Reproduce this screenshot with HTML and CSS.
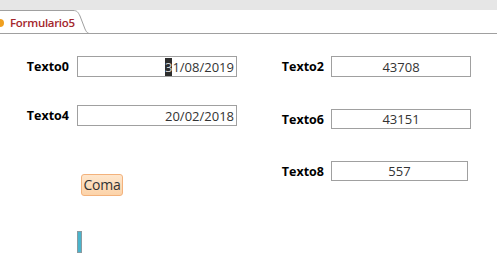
FILE: index.html
```html
<!DOCTYPE html>
<html lang="es">
<head>
<meta charset="utf-8">
<title>Formulario5</title>
<link rel="stylesheet" href="styles.css">
</head>
<body>
<div class="topbar"></div>
<div class="tabstrip">
  <div class="tab">
    <svg class="tab-shape" width="90" height="24" viewBox="0 0 90 24">
      <path d="M0 0.5 H73 C77 0.5 78 2 80 6 L85 19 C86.5 22.5 88 23.5 90 23.5" fill="#fff" stroke="#a0a0a0" stroke-width="1"/>
    </svg>
    <span class="tab-icon"></span>
    <span class="tab-label">Formulario5</span>
  </div>
</div>
<div class="form">
  <div class="col col-left">
    <div class="row row-0">
      <span class="label">Texto0</span>
      <span class="box box-left"><span class="caret">3</span>1/08/2019</span>
    </div>
    <div class="row row-4">
      <span class="label">Texto4</span>
      <span class="box box-left">20/02/2018</span>
    </div>
    <div class="btn-wrap"><button class="btn">Coma</button></div>
    <div class="bar"></div>
  </div>
  <div class="col col-right">
    <div class="row row-2">
      <span class="label">Texto2</span>
      <span class="box box-right center">43708</span>
    </div>
    <div class="row row-6">
      <span class="label">Texto6</span>
      <span class="box box-right center short">43151</span>
    </div>
    <div class="row row-8">
      <span class="label">Texto8</span>
      <span class="box box-right8 center short">557</span>
    </div>
  </div>
</div>
</body>
</html>
```
FILE: styles.css
```css
* { box-sizing: border-box; }
html, body { margin: 0; padding: 0; background: #fff; }
body {
  width: 497px;
  height: 277px;
  overflow: hidden;
  font-family: "Open Sans", "Noto Sans", sans-serif;
}
.topbar { height: 10px; background: #e6e6e6; }
.tabstrip {
  height: 24px;
  border-bottom: 1px solid #a0a0a0;
  position: relative;
}
.tab {
  position: relative;
  width: 90px;
  height: 24px;
  display: flex;
  align-items: center;
}
.tab-shape { position: absolute; left: 0; top: 0; }
.tab-icon {
  position: relative;
  width: 4px;
  height: 8px;
  margin-top: 2px;
  background: #f0a020;
  border-radius: 0 4px 4px 0;
}
.tab-label {
  position: relative;
  margin-left: 6px;
  margin-top: 1px;
  font-size: 11.5px;
  font-weight: 600;
  color: #a3262c;
  letter-spacing: -0.3px;
}
.form { display: flex; }
.col { display: flex; flex-direction: column; }
.col-left { width: 237px; }
.row { display: flex; align-items: center; }
.label {
  font-size: 12.5px;
  font-weight: 700;
  color: #000;
  text-align: right;
  letter-spacing: 0;
}
.col-left .label { width: 69px; margin-right: 8px; }
.col-right .label { width: 87px; margin-right: 7px; }
.box {
  display: flex;
  align-items: center;
  justify-content: flex-end;
  height: 21px;
  border: 1px solid #a0a0a0;
  background: #fff;
  color: #333;
  font-size: 13px;
  padding-right: 2px;
}
.box.center { justify-content: center; padding-right: 0; }
.box.short { height: 20px; }
.box-left { width: 160px; }
.box-right { width: 140px; }
.box-right8 { width: 137px; }
.caret { background: #2d2d2d; color: #d8d8d8; }
.row-0 { margin-top: 22px; }
.row-4 { margin-top: 28px; }
.row-2 { margin-top: 22px; }
.row-6 { margin-top: 32px; }
.row-8 { margin-top: 32px; }
.btn-wrap { padding-left: 81px; margin-top: 47px; }
.btn {
  width: 42px;
  height: 22px;
  padding: 0;
  border: 1px solid #f3b27c;
  border-radius: 3px;
  background: linear-gradient(#fee6cc, #fcd3a9);
  color: #333;
  font-family: "Open Sans", "Noto Sans", sans-serif;
  font-size: 14px;
  letter-spacing: -0.2px;
}
.bar {
  margin-left: 77px;
  margin-top: 35px;
  width: 5px;
  height: 22px;
  background: #4ab4cc;
  border: 1px solid #8a9aa0;
}
```
